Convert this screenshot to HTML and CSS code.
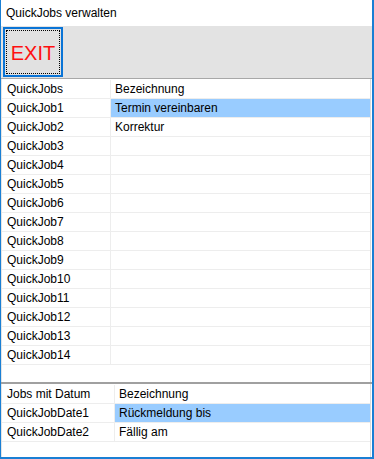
FILE: index.html
```html
<!DOCTYPE html>
<html lang="de">
<head>
<meta charset="utf-8">
<title>QuickJobs verwalten</title>
<link rel="stylesheet" href="styles.css">
</head>
<body>
<div class="window">
  <div class="titlebar">QuickJobs verwalten</div>
  <div class="toolbar">
    <button class="exit-btn"><span class="focus">EXIT</span></button>
  </div>
  <div class="panel panel-top">
    <div class="grid grid-jobs">
      <div class="cell c1">QuickJobs</div><div class="cell c2">Bezeichnung</div>
      <div class="cell c1">QuickJob1</div><div class="cell c2 sel">Termin vereinbaren</div>
      <div class="cell c1">QuickJob2</div><div class="cell c2">Korrektur</div>
      <div class="cell c1">QuickJob3</div><div class="cell c2"></div>
      <div class="cell c1">QuickJob4</div><div class="cell c2"></div>
      <div class="cell c1">QuickJob5</div><div class="cell c2"></div>
      <div class="cell c1">QuickJob6</div><div class="cell c2"></div>
      <div class="cell c1">QuickJob7</div><div class="cell c2"></div>
      <div class="cell c1">QuickJob8</div><div class="cell c2"></div>
      <div class="cell c1">QuickJob9</div><div class="cell c2"></div>
      <div class="cell c1">QuickJob10</div><div class="cell c2"></div>
      <div class="cell c1">QuickJob11</div><div class="cell c2"></div>
      <div class="cell c1">QuickJob12</div><div class="cell c2"></div>
      <div class="cell c1">QuickJob13</div><div class="cell c2"></div>
      <div class="cell c1">QuickJob14</div><div class="cell c2"></div>
    </div>
  </div>
  <div class="splitter"></div>
  <div class="panel panel-bottom">
    <div class="grid grid-dates">
      <div class="cell c1">Jobs mit Datum</div><div class="cell c2">Bezeichnung</div>
      <div class="cell c1">QuickJobDate1</div><div class="cell c2 sel">Rückmeldung bis</div>
      <div class="cell c1">QuickJobDate2</div><div class="cell c2">Fällig am</div>
    </div>
  </div>
</div>
</body>
</html>
```

FILE: styles.css
```css
html, body {
  margin: 0;
  padding: 0;
  background: #ffffff;
}

body {
  font-family: "Liberation Sans", Arial, sans-serif;
  font-size: 12px;
  color: #000000;
}

.window {
  width: 374px;
  height: 459px;
  box-sizing: border-box;
  border-left: 1px solid #1a7fd4;
  border-right: 2px solid #1a7fd4;
  border-bottom: 2px solid #1a7fd4;
  display: flex;
  flex-direction: column;
  background: #ffffff;
}

.titlebar {
  height: 26px;
  flex: none;
  box-sizing: border-box;
  padding: 4px 0 0 5px;
  line-height: 18px;
  background: #ffffff;
}

.toolbar {
  height: 53px;
  flex: none;
  box-sizing: border-box;
  background: #e3e3e3;
  border-bottom: 1px solid #a8a8a8;
  padding: 1px 0 0 2px;
}

.exit-btn {
  display: block;
  width: 60px;
  height: 50px;
  margin: 0;
  padding: 1px;
  box-sizing: border-box;
  border: 2px solid #0a74d6;
  background: #e1e1e1;
  font-family: "Liberation Sans", Arial, sans-serif;
  cursor: default;
}

.exit-btn .focus {
  display: flex;
  align-items: center;
  justify-content: center;
  width: 100%;
  height: 100%;
  box-sizing: border-box;
  border: 1px dotted #000000;
  color: #ff1010;
  font-size: 20px;
  padding-top: 2px;
}

.panel {
  display: flex;
  flex-direction: column;
  box-sizing: border-box;
  margin-right: 1px;
  padding-top: 1px;
  border-left: 1px solid #e4e4e4;
  border-right: 1px solid #dcdcdc;
}

.panel-top {
  height: 303px;
  flex: none;
}

.panel-bottom {
  flex: 1;
}

.splitter {
  height: 2px;
  flex: none;
  background: #a0a0a0;
}

.grid {
  display: grid;
}

.grid-jobs {
  grid-template-columns: 109px 1fr;
}

.grid-dates {
  grid-template-columns: 113px 1fr;
}

.cell {
  height: 19px;
  box-sizing: border-box;
  padding-top: 1px;
  line-height: 17px;
  border-bottom: 1px solid #ededed;
  white-space: nowrap;
  overflow: hidden;
}

.c1 {
  padding-left: 5px;
  border-right: 1px solid #ededed;
}

.c2 {
  padding-left: 4px;
}

.sel {
  background: #99ccff;
}
```
